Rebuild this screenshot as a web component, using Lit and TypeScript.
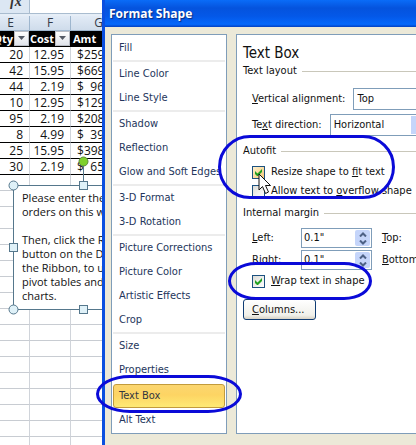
import { LitElement, html, css, svg } from "lit";
import { customElement, property } from "lit/decorators.js";

const orders = [
  ["20", "12.95", "259"],
  ["42", "15.95", "669"],
  ["44", "2.19", "96"],
  ["10", "12.95", "129"],
  ["95", "2.19", "208"],
  ["8", "4.99", "39"],
  ["25", "15.95", "398"],
  ["30", "2.19", "65"],
];

const noteLines = [
  "Please enter the",
  "orders on this wo",
  "",
  "Then, click the Re",
  "button on the Da",
  "the Ribbon, to up",
  "pivot tables and",
  "charts.",
];

const sections = [
  ["Fill"],
  ["Line Color", "Line Style"],
  ["Shadow", "Reflection", "Glow and Soft Edges"],
  ["3-D Format", "3-D Rotation"],
  ["Picture Corrections", "Picture Color", "Artistic Effects", "Crop"],
  ["Size", "Properties"],
  ["Text Box", "Alt Text"],
];

@customElement("order-sheet")
export class OrderSheet extends LitElement {
  static styles = css`
    :host {
      display: block;
      position: relative;
      overflow: hidden;
      background: #fff;
      font: 12px/15px "Open Sans", "Noto Sans", sans-serif;
      color: #111;
    }
    .formula {
      display: flex;
      height: 13px;
      background: #fff;
      border-bottom: 1px solid #a9bccf;
    }
    .fx {
      box-sizing: border-box;
      width: 30px;
      padding-left: 10px;
      overflow: hidden;
      background: #dce7f3;
      border-right: 1px solid #a9bccf;
      font: italic bold 14px/4px "Liberation Serif", serif;
      color: #333;
    }
    .gap {
      height: 2px;
      background: #e6eef7;
    }
    table {
      border-collapse: separate;
      border-spacing: 0;
      table-layout: fixed;
      width: 131px;
    }
    .e { width: 30px; }
    .f { width: 41px; }
    .g { width: 60px; }
    th, td {
      box-sizing: border-box;
      height: 16px;
      padding: 0;
      overflow: hidden;
      white-space: nowrap;
      border-right: 1px solid #d0d4da;
      border-bottom: 1px solid #c8ccd2;
      text-align: right;
      font-weight: normal;
    }
    .letters th {
      height: 15px;
      line-height: 14px;
      background: linear-gradient(#e2ebf6, #cfdceb);
      border-color: #9eb6ce;
      text-align: center;
      color: #333b48;
      padding-right: 8px;
    }
    .letters .mid { padding-right: 0; }
    .letters .last { padding-right: 4px; }
    .names th {
      background: #000;
      border-color: #000;
      color: #fff;
      font-size: 11px;
      font-weight: bold;
    }
    .name {
      display: flex;
      justify-content: flex-end;
      gap: 1px;
      height: 15px;
    }
    .name.start {
      justify-content: flex-start;
      padding-left: 2px;
    }
    .order td {
      border-bottom-color: #000;
      line-height: 14px;
      padding-right: 6px;
      padding-top: 1px;
    }
    .order .amt {
      padding-right: 0;
    }
    .money {
      display: flex;
      justify-content: space-between;
      width: 27px;
      padding-left: 6px;
    }
    .tall td { height: 22px; }
    .filter {
      flex: none;
      display: block;
      width: 15px;
      height: 15px;
      padding: 0;
      border: 1px solid #b8bcc4;
      background: linear-gradient(#fff, #dfe3ea);
    }
    .filter svg { display: block; margin: 4px 3px; }
    .note {
      position: absolute;
      left: 13px;
      top: 185px;
      box-sizing: border-box;
      width: 141px;
      height: 125px;
      padding: 5px 8px;
      border: 1px solid #55778c;
      background: #fff;
      font-size: 11px;
      line-height: 14px;
      white-space: pre;
    }
    .note p { margin: 0; min-height: 14px; }
    .handles {
      position: absolute;
      left: 7px;
      top: 155px;
      display: block;
    }
  `;

  filter() {
    return html`<button class="filter" aria-label="Filter"><svg width="7" height="5"><path d="M0 0h7L3.5 4z" fill="#555b66" /></svg></button>`;
  }

  render() {
    return html`
      <div class="formula"><div class="fx">fx</div></div>
      <div class="gap"></div>
      <table>
        <colgroup><col class="e" /><col class="f" /><col class="g" /></colgroup>
        <thead>
          <tr class="letters"><th>E</th><th class="mid">F</th><th class="last">G</th></tr>
          <tr class="names">
            <th><div class="name">Qty${this.filter()}</div></th>
            <th><div class="name">Cost${this.filter()}</div></th>
            <th><div class="name start">Amt</div></th>
          </tr>
        </thead>
        <tbody>
          ${orders.map(([qty, cost, amt]) => html`<tr class="order">
            <td>${qty}</td><td>${cost}</td>
            <td class="amt"><div class="money"><span>$</span><span>${amt}</span></div></td>
          </tr>`)}
          ${Array.from({ length: 17 }, (_, i) => html`<tr class=${i === 2 ? "tall" : "blank"}><td></td><td></td><td></td></tr>`)}
        </tbody>
      </table>
      <div class="note">${noteLines.map((l) => html`<p>${l}</p>`)}</div>
      <svg class="handles" width="96" height="161">
        <g stroke="#55778c" fill="#dff1f8">
          <path d="M76.5 10v20" />
          <circle cx="6.5" cy="30.5" r="4.5" />
          <circle cx="6.5" cy="154.5" r="4.5" />
          <rect x="2.5" y="88.5" width="8" height="8" />
          <rect x="72.5" y="26.5" width="8" height="8" />
          <rect x="72.5" y="150.5" width="8" height="8" />
          <circle cx="76.5" cy="6.5" r="4.5" fill="#7fd02c" stroke="#5c8a3a" />
        </g>
      </svg>
    `;
  }
}

@customElement("spin-box")
export class SpinBox extends LitElement {
  @property() name = "";
  @property() hotkey = "";
  @property() value = "";

  static styles = css`
    :host { display: flex; align-items: center; }
    label { width: 49px; }
    .box {
      box-sizing: border-box;
      display: flex;
      width: 71px;
      height: 20px;
      border: 1px solid #7f9db9;
      background: #fff;
    }
    input {
      flex: 1;
      min-width: 0;
      border: 0;
      padding: 0 2px;
      background: none;
      font: inherit;
      color: inherit;
      outline: 0;
    }
    .arrows {
      display: flex;
      flex-direction: column;
      width: 15px;
      margin: 1px;
      border-radius: 2px;
      background: #c5d5fa;
    }
    button {
      flex: 1;
      display: flex;
      align-items: center;
      justify-content: center;
      padding: 0;
      border: 0;
      background: none;
    }
  `;

  render() {
    return html`
      <label for="value"><u>${this.hotkey}</u>${this.name}:</label>
      <div class="box">
        <input id="value" .value=${this.value} />
        <div class="arrows">
          <button aria-label="Increase"><svg width="8" height="5"><path d="M1 4.5L4 1.5L7 4.5" fill="none" stroke="#4d6185" stroke-width="2" /></svg></button>
          <button aria-label="Decrease"><svg width="8" height="5"><path d="M1 .5L4 3.5L7 .5" fill="none" stroke="#4d6185" stroke-width="2" /></svg></button>
        </div>
      </div>
    `;
  }
}

@customElement("format-dialog")
export class FormatDialog extends LitElement {
  static styles = css`
    :host {
      display: block;
      position: relative;
      box-sizing: border-box;
      border-left: 3px solid #0a4fe0;
      background: #ece9d8;
      font: 11px/14px "DejaVu Sans Condensed", "Noto Sans", sans-serif;
      color: #111;
    }
    .title {
      margin: 0;
      height: 27px;
      padding-left: 4px;
      background: linear-gradient(#0a6cf8 0, #0553dd 30%, #0458e8 60%, #0568fb 90%, #0340c0);
      font: bold 12px/28px "Open Sans", "Noto Sans", sans-serif;
      color: #fff;
      text-shadow: 1px 1px 1px #0a2a80;
    }
    .body {
      display: flex;
      align-items: stretch;
      gap: 9px;
      padding: 7px 6px;
    }
    nav, .pane {
      box-sizing: border-box;
      border: 1px solid #7f9db9;
      background: #fff;
    }
    nav {
      flex: none;
      width: 116px;
      padding: 1px;
      color: #24365c;
    }
    .group + .group { border-top: 2px solid #ececec; }
    .group + .plain { border-top-color: #fff; }
    .item {
      box-sizing: border-box;
      display: block;
      width: 100%;
      height: 24px;
      padding: 0 5px;
      border: 1px solid transparent;
      border-radius: 3px;
      background: none;
      font: inherit;
      color: inherit;
      text-align: left;
      white-space: nowrap;
    }
    .item.on {
      border-color: #c29b3c;
      background: linear-gradient(#fbd670, #fdd463 45%, #feea74);
      color: #33373f;
    }
    .current { position: relative; }
    .ring {
      box-sizing: border-box;
      position: absolute;
      border: 3px solid #0a0ad8;
      pointer-events: none;
    }
    .ring.side {
      left: -17px;
      right: -17px;
      top: -9px;
      height: 38px;
      border-radius: 34px / 19px;
    }
    .pane {
      flex: 1 0 320px;
      padding: 9px 6px;
    }
    h2 {
      margin: 0;
      font-size: 15px;
      font-weight: normal;
      line-height: 18px;
    }
    fieldset {
      position: relative;
      margin: 0;
      padding: 0;
      border: 0;
      min-width: 0;
    }
    .caption {
      display: flex;
      align-items: center;
      gap: 5px;
      height: 18px;
    }
    .caption::after {
      content: "";
      flex: 1;
      border-top: 1px solid #c9c7ba;
    }
    .rows {
      display: flex;
      flex-direction: column;
      padding-left: 9px;
    }
    .layout { gap: 4px; padding-top: 8px; padding-bottom: 6px; }
    .field { display: flex; align-items: center; gap: 8px; }
    select {
      box-sizing: border-box;
      height: 22px;
      padding: 0 3px;
      border: 1px solid #7f9db9;
      border-radius: 0;
      appearance: none;
      background: linear-gradient(#c5d5fa, #c5d5fa) right 1px center / 15px 18px no-repeat #fff;
      font: inherit;
      color: inherit;
    }
    .long { width: 150px; }
    .short { width: 98px; }
    .fit { gap: 5px; padding-top: 5px; padding-bottom: 6px; }
    .check {
      display: flex;
      align-items: center;
      gap: 6px;
      height: 14px;
    }
    .check input {
      appearance: none;
      flex: none;
      box-sizing: border-box;
      width: 13px;
      height: 13px;
      margin: 0;
      border: 1px solid #1c5180;
      background: linear-gradient(135deg, #dcdcd7, #fff);
    }
    .check .hot { background: linear-gradient(135deg, #fdf0cf, #f5c878); }
    .tick { position: relative; display: flex; }
    .tick svg { position: absolute; left: 3px; top: 3px; }
    .ring.fitting {
      left: -25px;
      top: -7px;
      width: 177px;
      height: 64px;
      border-radius: 32px;
    }
    .ring.wrapping {
      left: -24px;
      top: -12px;
      width: 144px;
      height: 38px;
      border-radius: 28px / 19px;
    }
    .margins { gap: 2px; padding-top: 6px; }
    .pair { display: flex; align-items: center; gap: 10px; }
    .wrap { position: relative; margin-top: 2px; }
    .columns {
      box-sizing: border-box;
      display: block;
      width: 73px;
      height: 21px;
      margin-top: 11px;
      padding: 0 8px;
      border: 1px solid #0f3c74;
      border-radius: 3px;
      background: linear-gradient(#fff, #f0f0ea 80%, #d8d2c4);
      font: inherit;
      color: inherit;
      text-align: left;
    }
    .pointer { position: absolute; left: 15px; top: 31px; }
  `;

  tick() {
    return html`<svg width="7" height="7" aria-hidden="true">${svg`<path d="M0 2v3l2.5 2.5L7 3V0L2.5 4.5z" fill="#21a121" />`}</svg>`;
  }

  render() {
    return html`
      <h1 class="title">Format Shape</h1>
      <div class="body">
        <nav>
          ${sections.map((group) => html`<div class="group ${group.includes("Text Box") ? "plain" : ""}">
            ${group.map((name) => name === "Text Box"
              ? html`<div class="current"><button class="item on">${name}</button><span class="ring side"></span></div>`
              : html`<button class="item">${name}</button>`)}
          </div>`)}
        </nav>
        <section class="pane">
          <h2>Text Box</h2>
          <fieldset>
            <div class="caption">Text layout</div>
            <div class="rows layout">
              <div class="field">
                <label for="valign"><u>V</u>ertical alignment:</label>
                <select id="valign" class="long"><option>Top</option></select>
              </div>
              <div class="field">
                <label for="direction">Te<u>x</u>t direction:</label>
                <select id="direction" class="short"><option>Horizontal</option></select>
              </div>
            </div>
          </fieldset>
          <fieldset>
            <div class="caption">Autofit</div>
            <div class="rows fit">
              <label class="check"><span class="tick"><input type="checkbox" class="hot" checked />${this.tick()}</span><span>Resize shape to <u>f</u>it text</span></label>
              <label class="check"><span class="tick"><input type="checkbox" /></span><span>Allow text to <u>o</u>verflow shape</span></label>
            </div>
            <span class="ring fitting"></span>
            <svg class="pointer" width="14" height="22" viewBox="0 0 14 22" aria-hidden="true">
              <path d="M1 1V17L4.5 13.5L7.5 20.5L10.5 19L7.5 12.5H12.5z" fill="#fff" stroke="#111" />
            </svg>
          </fieldset>
          <fieldset>
            <div class="caption">Internal margin</div>
            <div class="rows margins">
              <div class="pair"><spin-box hotkey="L" name="eft" value='0.1"'></spin-box><span><u>T</u>op:</span></div>
              <div class="pair"><spin-box hotkey="R" name="ight" value='0.1"'></spin-box><span><u>B</u>ottom</span></div>
              <div class="wrap">
                <label class="check"><span class="tick"><input type="checkbox" checked />${this.tick()}</span><span><u>W</u>rap text in shape</span></label>
                <span class="ring wrapping"></span>
              </div>
            </div>
          </fieldset>
          <button class="columns"><u>C</u>olumns...</button>
        </section>
      </div>
    `;
  }
}

@customElement("app-root")
export class AppRoot extends LitElement {
  static styles = css`
    :host {
      display: grid;
      grid-template-columns: 102px minmax(0, 1fr);
      height: 100vh;
      overflow: hidden;
    }
  `;

  render() {
    return html`<order-sheet></order-sheet><format-dialog></format-dialog>`;
  }
}
